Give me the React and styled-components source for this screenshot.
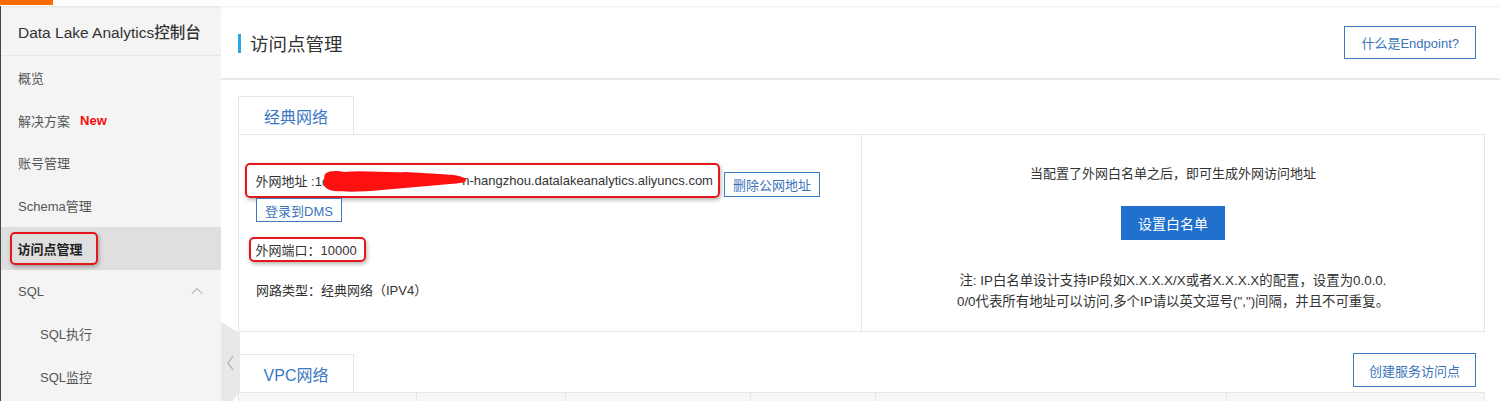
import React from 'react'
import styled, { createGlobalStyle } from 'styled-components'
import { ChevronUp } from 'lucide-react'

const font = `"Liberation Sans", "Noto Sans CJK SC", sans-serif`
const blue = '#3a78c3'

const GlobalStyle = createGlobalStyle`
  html, body {
    margin: 0;
    padding: 0;
    background: #fff;
    font-family: ${font};
    overflow: hidden;
  }
  * { box-sizing: border-box; }
`

const Page = styled.div`
  display: flex;
  flex-direction: column;
  height: 401px;
  overflow: hidden;
`

const TopBar = styled.div`
  height: 6px;
  flex: none;
  background: #fff;
  box-shadow: 0 1px 2px rgba(0, 0, 0, 0.08);
  position: relative;
  z-index: 2;
`

const Brand = styled.div`
  width: 53px;
  height: 5px;
  background: #ff6a00;
`

const Body = styled.div`
  flex: 1;
  display: flex;
  position: relative;
`

const Sidebar = styled.aside`
  width: 221px;
  flex: none;
  background: #f4f4f4;
  border-left: 1px solid #3d4b45;
`

const SideTitle = styled.div`
  height: 50px;
  display: flex;
  align-items: center;
  padding-left: 17px;
  font-size: 15.5px;
  font-weight: 500;
  color: #333;
  border-bottom: 1px solid #e6e6e6;
`

const MenuItem = styled.div`
  height: 42.75px;
  display: flex;
  align-items: center;
  padding-left: ${p => (p.$sub ? 39 : 17)}px;
  padding-right: 14px;
  font-size: 13px;
  color: ${p => (p.$active ? '#222' : '#555')};
  font-weight: ${p => (p.$active ? 700 : 400)};
  background: ${p => (p.$active ? '#dfdfdf' : 'transparent')};
`

const NewTag = styled.span`
  margin-left: 10px;
  color: #f20c0c;
  font-weight: 700;
  font-size: 13px;
`

const MenuChevron = styled(ChevronUp)`
  margin-left: auto;
  color: #8f8f8f;
`

const Highlight = styled.span`
  display: inline-flex;
  align-items: center;
  border: 2.5px solid #e3161c;
  border-radius: 5px;
  box-shadow: 1px 2px 4px rgba(0, 0, 0, 0.3);
`

const SideHighlight = styled(Highlight)`
  height: 33px;
  margin-left: -8px;
  padding: 0 13px 0 5.5px;
`

const CollapseHandle = styled.svg`
  position: absolute;
  left: 221px;
  top: 316px;
`

const Main = styled.main`
  flex: 1;
  background: #fff;
  display: flex;
  flex-direction: column;
`

const Header = styled.header`
  height: 74px;
  flex: none;
  display: flex;
  align-items: center;
  justify-content: space-between;
  padding: 0 24px 0 17px;
  border-bottom: 2px solid #e8e8e8;
`

const PageTitle = styled.h1`
  margin: 2px 0 0;
  display: flex;
  align-items: center;
  font-size: 18.5px;
  font-weight: 400;
  color: #333;
  &::before {
    content: '';
    width: 3px;
    height: 19px;
    background: #2aa6e4;
    margin-right: 9px;
  }
`

const OutlineButton = styled.button`
  height: ${p => p.$h || 33}px;
  padding: 0 ${p => p.$px || 16}px;
  border: 1px solid #3b7cc4;
  background: #fff;
  color: #3b74ba;
  font-family: ${font};
  font-size: 13px;
  border-radius: 0;
  cursor: pointer;
`

const PrimaryButton = styled.button`
  height: 34px;
  padding: 0 17px;
  border: none;
  background: #2170cd;
  color: #fff;
  font-family: ${font};
  font-size: 14px;
  cursor: pointer;
`

const Content = styled.div`
  padding: 16px 15px 0 17px;
`

const Tab = styled.div`
  width: 116px;
  height: 38px;
  display: flex;
  align-items: center;
  justify-content: center;
  border: 1px solid #e6e6e6;
  border-bottom: none;
  color: ${blue};
  font-size: 16px;
`

const Panel = styled.div`
  display: grid;
  grid-template-columns: 623px 1fr;
  height: 198px;
  border: 1px solid #e6e6e6;
`

const LeftCell = styled.div`
  border-right: 1px solid #e6e6e6;
  padding: 28px 17px 0;
  font-size: 13px;
  color: #333;
`

const AddressRow = styled.div`
  display: flex;
  align-items: flex-end;
`

const AddressBox = styled(Highlight)`
  height: 35px;
  margin-left: -11px;
  padding: 0 5px 0 8.5px;
  white-space: nowrap;
`

const Redacted = styled.span`
  position: relative;
  display: inline-block;
  width: 133px;
  height: 14px;
`

const Scribble = styled.svg`
  position: absolute;
  left: -5px;
  top: -6px;
`

const PortBox = styled(Highlight)`
  height: 25px;
  margin: 15px 0 0 -7px;
  padding: 0 7px 0 4.5px;
`

const InfoLine = styled.div`
  margin-top: 21px;
  line-height: 16px;
`

const RightCell = styled.div`
  display: flex;
  flex-direction: column;
  align-items: center;
  padding-top: 28px;
  font-size: 13px;
  color: #333;
`

const Note = styled.p`
  margin: 29.5px 0 0;
  text-align: center;
  line-height: 21px;
  font-size: 13.4px;
`

const SectionBar = styled.div`
  display: flex;
  justify-content: space-between;
  align-items: flex-end;
  margin-top: 21px;
`

const TableHead = styled.div`
  display: grid;
  grid-template-columns: 177px 149px 185px 125px 351px 1fr;
  height: 40px;
  background: #f7f7f7;
  border: 1px solid #e6e6e6;
`

const HeadCell = styled.div`
  border-left: 1px solid #e6e6e6;
  &:first-child { border-left: none; }
`

const menu = ['概览', '解决方案', '账号管理', 'Schema管理', '访问点管理', 'SQL', 'SQL执行', 'SQL监控']

export default function App() {
  return (
    <Page>
      <GlobalStyle />
      <TopBar><Brand /></TopBar>
      <Body>
        <Sidebar>
          <SideTitle>Data Lake Analytics控制台</SideTitle>
          {menu.map(item => {
            const active = item === '访问点管理'
            const sub = item.startsWith('SQL') && item !== 'SQL'
            return (
              <MenuItem key={item} $active={active} $sub={sub}>
                {active ? <SideHighlight>{item}</SideHighlight> : item}
                {item === '解决方案' && <NewTag>New</NewTag>}
                {item === 'SQL' && <MenuChevron size={20} strokeWidth={1.1} />}
              </MenuItem>
            )
          })}
        </Sidebar>

        <Main>
          <Header>
            <PageTitle>访问点管理</PageTitle>
            <OutlineButton $px={16}>什么是Endpoint?</OutlineButton>
          </Header>

          <Content>
            <Tab>经典网络</Tab>
            <Panel>
              <LeftCell>
                <AddressRow>
                  <AddressBox>
                    外网地址 :1d
                    <Redacted>
                      <Scribble width="143" height="26" viewBox="0 0 143 26">
                        <path
                          d="M1 6 C6 2 14 3 20 4 C40 2 62 5 82 4 C100 5 118 6 130 7 C137 8 142 10 142 12 C142 15 136 15 126 16 C104 18 80 20 58 22 C40 24 22 24 10 23 C4 22 0 20 0 15 C0 11 0 8 1 6 Z"
                          fill="#ff1010"
                        />
                      </Scribble>
                    </Redacted>
                    n-hangzhou.datalakeanalytics.aliyuncs.com
                  </AddressBox>
                  <OutlineButton $h={25} $px={8} style={{ marginLeft: 4, marginBottom: 1 }}>删除公网地址</OutlineButton>
                </AddressRow>
                <OutlineButton $h={24} $px={8}>登录到DMS</OutlineButton>
                <div>
                  <PortBox>外网端口：10000</PortBox>
                </div>
                <InfoLine>网路类型：经典网络（IPV4）</InfoLine>
              </LeftCell>
              <RightCell>
                <div>当配置了外网白名单之后，即可生成外网访问地址</div>
                <PrimaryButton style={{ marginTop: 24 }}>设置白名单</PrimaryButton>
                <Note>
                  注: IP白名单设计支持IP段如X.X.X.X/X或者X.X.X.X的配置，设置为0.0.0.<br />
                  0/0代表所有地址可以访问,多个IP请以英文逗号(",")间隔，并且不可重复。
                </Note>
              </RightCell>
            </Panel>

            <SectionBar>
              <Tab>VPC网络</Tab>
              <OutlineButton $h={34} $px={15} style={{ marginBottom: 5, marginRight: 9 }}>创建服务访问点</OutlineButton>
            </SectionBar>
            <TableHead>
              {[0, 1, 2, 3, 4, 5].map(i => <HeadCell key={i} />)}
            </TableHead>
          </Content>
        </Main>

        <CollapseHandle width="19" height="92" viewBox="0 0 19 92">
          <path d="M0 0 L19 11 L19 70 L0 92 Z" fill="#e8e8e8" />
          <path d="M12 34 L7 41 L12 48" fill="none" stroke="#b0b0b0" strokeWidth="1.2" />
        </CollapseHandle>
      </Body>
    </Page>
  )
}
